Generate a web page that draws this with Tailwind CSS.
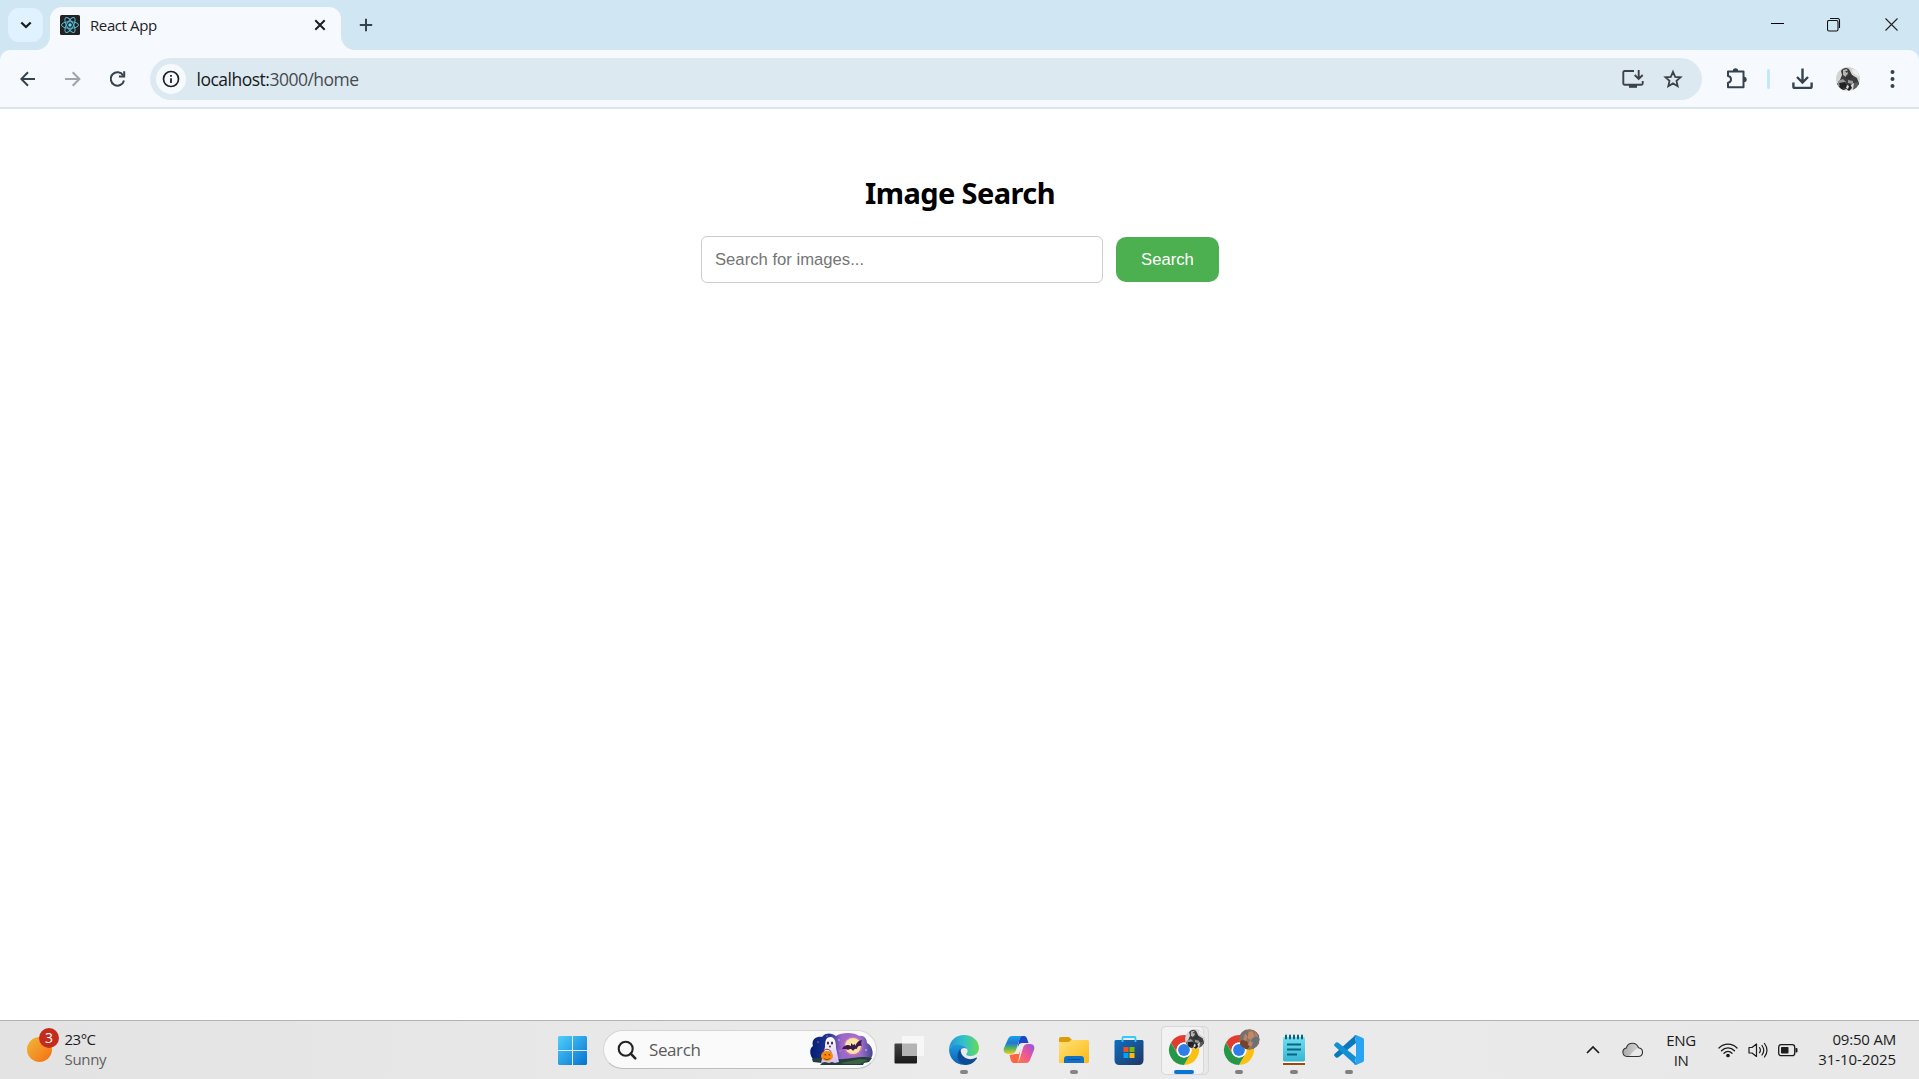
<!DOCTYPE html>
<html lang="en">
<head>
<meta charset="utf-8">
<title>React App</title>
<script src="https://cdn.jsdelivr.net/npm/@tailwindcss/browser@4"></script>
</head>
<body class="flex h-screen w-screen flex-col overflow-hidden bg-white font-['Open_Sans','Noto_Sans',sans-serif]">

<!-- Tab strip -->
<header class="flex h-[50px] shrink-0 items-start bg-[#d0e6f3]">
  <button class="mt-2 ml-2 grid h-[34px] w-[35px] place-items-center rounded-[11px] bg-[#e0f1ff]">
    <svg class="size-4" viewBox="0 0 16 16" fill="none" stroke="#1b1d1f" stroke-width="2.3"><path d="M3.3 5.5 8 10l4.700-4.500"/></svg>
  </button>
  <div class="relative mt-[7px] ml-[7px] flex h-[43px] w-[291px] items-center rounded-t-[12px] bg-[#f6faff] pb-[7px]">
    <svg class="absolute bottom-0 -left-[14px] size-[14px]" viewBox="0 0 14 14"><path d="M14 0v14H0A14 14 0 0 0 14 0z" fill="#f6faff"/></svg>
    <svg class="absolute -right-[14px] bottom-0 size-[14px]" viewBox="0 0 14 14"><path d="M0 0v14h14A14 14 0 0 1 0 0z" fill="#f6faff"/></svg>
    <svg class="ml-[10px] size-5" viewBox="0 0 20 20"><rect width="20" height="20" rx="1.500" fill="#222"/><g fill="none" stroke="#58b9d3" stroke-width="1"><ellipse cx="10" cy="10" rx="8.500" ry="3.300"/><ellipse cx="10" cy="10" rx="8.500" ry="3.300" transform="rotate(60 10 10)"/><ellipse cx="10" cy="10" rx="8.500" ry="3.300" transform="rotate(120 10 10)"/></g><circle cx="10" cy="10" r="1.700" fill="#61dafb"/></svg>
    <span class="-mt-px ml-[10px] w-[224px] text-[15px] leading-5 tracking-[-0.4px] text-[#1f2225]">React App</span>
    <svg class="size-3" viewBox="0 0 12 12" stroke="#1b1d1f" stroke-width="2"><path d="M1.300 1.300l9.400 9.400M10.700 1.300l-9.400 9.400"/></svg>
  </div>
  <svg class="mt-[18px] ml-[18px] size-[14px]" viewBox="0 0 14 14" stroke="#34434e" stroke-width="2"><path d="M7 .8v12.400M.8 7h12.400"/></svg>
  <div class="ml-auto flex gap-[43px] pt-[18px] pr-[21px]">
    <svg class="h-[14px] w-[14px]" viewBox="0 0 14 14"><path d="M1 5.500h13" stroke="#000"/></svg>
    <svg class="h-[14px] w-[14px]" viewBox="0 0 14 14" fill="none" stroke="#111" stroke-width="1.100"><rect x=".5" y="2.500" width="10.500" height="10.500" rx="1.500"/><path d="M3 .5h7.500a2 2 0 0 1 2 2V10"/></svg>
    <svg class="h-[14px] w-[14px]" viewBox="0 0 14 14" stroke="#222" stroke-width="1.100"><path d="M1.500.5l12 12M13.500.5l-12 12"/></svg>
  </div>
</header>

<!-- Toolbar -->
<div class="h-[59px] shrink-0 bg-[#d0e6f3]">
  <div class="flex h-full items-center rounded-t-[10px] border-b-2 border-[#dce3ea] bg-[#f6faff] pl-[20px]">
    <svg class="size-4" viewBox="0 0 16 16" fill="none" stroke="#34434e" stroke-width="2"><path d="M15 8H1.800M8 1.300 1.300 8 8 14.700"/></svg>
    <svg class="ml-[29px] size-4" viewBox="0 0 16 16" fill="none" stroke="#a1a5aa" stroke-width="2"><path d="M0 8h13.500M7.700 1.300 14.400 8l-6.700 6.700"/></svg>
    <svg class="ml-[29px] size-4" viewBox="0 0 16 16" fill="none" stroke="#34434e" stroke-width="2"><path d="M13.200 4.400A6.700 6.700 0 1 0 14 9.500"/><path d="M14.200.3v5.200H8.900"/></svg>
    <div class="ml-[24px] flex h-[42px] w-[1552px] items-center rounded-full bg-[#dde9f1] pr-[19px] pl-1.5">
      <span class="grid size-[30px] place-items-center rounded-full bg-[#f6faff]"><svg class="size-[18px]" viewBox="0 0 18 18"><circle cx="9" cy="9" r="7.500" fill="none" stroke="#1e2225" stroke-width="1.700"/><path d="M9 8.200v4.800M9 5v1.800" stroke="#1e2225" stroke-width="1.800"/></svg></span>
      <span class="mt-px ml-[10.500px] text-[17.500px] leading-6 tracking-[-0.5px] text-[#474b50]"><span class="text-[#17191c]">localhost:</span>3000/home</span>
      <svg class="ml-auto h-[20px] w-[22px]" viewBox="0 0 22 20" fill="none" stroke="#3d4247" stroke-width="1.900"><path d="M12 2H2.500a1.200 1.200 0 0 0-1.200 1.200v11.300c0 .7.500 1.200 1.200 1.200h17c.7 0 1.200-.5 1.200-1.200V12M16.700 1v8.500M12.700 6l4 4 4-4"/><path d="M7 15.800h8v3H7z" fill="#3d4247" stroke="none"/></svg>
      <svg class="ml-[19px] size-5" viewBox="0 0 20 20" fill="none" stroke="#3d4247" stroke-width="1.800"><path d="m10 2.800 2.200 5 5.400.500-4.100 3.600 1.200 5.300L10 14.400l-4.700 2.800 1.200-5.300L2.400 8.300l5.400-.5z"/></svg>
    </div>
    <svg class="ml-[24px] h-[22px] w-[22px]" viewBox="0 0 22 22"><path d="M2 3.500h15.500v15.700H2v-4.500c4-.5 4-6.200 0-6.700z" fill="none" stroke="#34434e" stroke-width="2" stroke-linejoin="round"/><path d="M6.800 3a2.700 2.700 0 0 1 5.400 0zM18 8.700a2.700 2.700 0 0 1 0 5.400z" fill="#34434e"/></svg>
    <span class="ml-[19px] h-5 w-[2.500px] rounded-full bg-[#c2e7ff]"></span>
    <svg class="ml-[22.500px] h-[22px] w-[22px]" viewBox="0 0 22 22" fill="none" stroke="#34434e" stroke-width="2.400"><path d="M10.500.5V14M5 9l5.500 5.500L16 9M1.400 14.500v4c0 .9.500 1.400 1.400 1.400h15.400c.9 0 1.400-.5 1.400-1.400v-4"/></svg>
    <svg class="ml-[22px] size-[24px]" viewBox="0 0 24 24"><defs><clipPath id="avatarClip"><circle cx="12" cy="12" r="12"/></clipPath><g id="avatarMono" clip-path="url(#avatarClip)"><rect width="24" height="24" fill="#d4d4d4"/><path d="M5 4c2-4 8-4 9 0l2 4 5 3 3 8-7-3-4 4-8 5-4-8 3-4 2-5z" fill="#3c3c3c"/><path d="m7 3 4-1 1 4-2 4-3-2z" fill="#b5b5b5"/><path d="m9 4 3 0-1 2zM10 8l2 2 2-3 3 2-3 3-4 0z" fill="#333"/><path d="m2 14 5-2 3 3-3 3-5 1zM12 13l5 1 0 3-5-1z" fill="#999"/><path d="m3 16 6-1 2 4 3-2 2 4-3 3-5-4-3 3z" fill="#222"/><path d="m16 2 6 2 1 6-6-4z" fill="#eee"/><path d="m18 16 5-1-2 6-4 2z" fill="#5a5a5a"/><path d="m11 18 2 1-1 3-2-1z" fill="#ddd"/></g></defs><use href="#avatarMono"/></svg>
    <svg class="ml-[30px] h-5 w-[5px]" viewBox="0 0 5 20" fill="#34434e"><circle cx="2.500" cy="3" r="2"/><circle cx="2.500" cy="10" r="2"/><circle cx="2.500" cy="17" r="2"/></svg>
  </div>
</div>

<!-- Page -->
<main class="flex flex-1 flex-col items-center bg-white pt-[64px]">
  <h1 class="pl-px font-['Noto_Sans','Open_Sans',sans-serif] text-[29px] leading-[40px] font-bold tracking-[-0.6px] text-black">Image Search</h1>
  <form class="mt-[23px] flex items-center gap-[13px] pl-px font-['Liberation_Sans',Arial,sans-serif] text-[16.670px]">
    <input class="h-[47px] w-[402px] rounded-[6px] border border-[#ccc] px-[13px] placeholder:text-[#757575]" placeholder="Search for images...">
    <button type="button" class="h-[45px] w-[103px] rounded-[10px] bg-[#4caf50] text-white">Search</button>
  </form>
</main>

<!-- Taskbar -->
<footer class="flex h-[59px] shrink-0 items-center border-t border-[#b3b3b3] bg-linear-to-r from-[#e3e3e3] via-[#ebebeb] to-[#e8e8e8] text-[#1c1c1c]">
  <div class="flex w-[558px] items-center pl-[27px]">
    <div class="relative -mt-px size-[25px] rounded-full bg-linear-to-br from-[#efb83a] to-[#f36b0c]">
      <span class="absolute -top-[9px] left-[12px] grid size-5 place-items-center rounded-full bg-[#c42b1c] text-[14px] leading-none text-white">3</span>
    </div>
    <div class="-mt-[2px] ml-[12.500px] text-[15px] leading-5 tracking-[-0.5px]"><div>23°C</div><div class="tracking-[-0.3px] text-[#5f5f5f]">Sunny</div></div>
  </div>
  <svg class="size-[29px]" viewBox="0 0 29 29"><defs><linearGradient id="winBlue" x1="0" y1="0" x2="29" y2="29" gradientUnits="userSpaceOnUse"><stop stop-color="#4fd0fc"/><stop offset="1" stop-color="#0670cf"/></linearGradient></defs><path d="M1 0h13v14H0V1zM15 0h13l1 1v13H15zM0 15h14v14H1l-1-1zM15 15h14v13l-1 1H15z" fill="url(#winBlue)"/></svg>
  <div class="-mt-px ml-[16px] flex h-[39px] w-[274px] items-center rounded-full border border-[#d5d5d5] border-b-[#bdbdbd] bg-[#fafafa] pr-[3px] pl-[13px]">
    <svg class="size-[20px]" viewBox="0 0 20 20" fill="none" stroke="#242424" stroke-width="2.100"><circle cx="8.700" cy="8.700" r="7"/><path d="m13.700 13.700 4.600 4.600" stroke-width="2.500" stroke-linecap="round"/></svg>
    <span class="mt-px ml-[12px] text-[17px] leading-6 tracking-[-0.4px] text-[#5b5b5b]">Search</span>
    <svg class="ml-auto h-[33px] w-[63px]" viewBox="0 0 63 33">
      <defs><linearGradient id="night"><stop stop-color="#051f72"/><stop offset=".3" stop-color="#203393"/><stop offset=".5" stop-color="#9a68c8"/><stop offset=".8" stop-color="#a070c8"/><stop offset="1" stop-color="#454597"/></linearGradient><linearGradient id="ghost" x2="0" y2="1"><stop stop-color="#fff"/><stop offset="1" stop-color="#d3bdf2"/></linearGradient></defs>
      <path d="M5 28C-1 24-1 15 3 13 1 7 6 3 12 4 15-.5 22-.5 26 3c5-4 19-4 23 0 5-1 8 3 8 7 6 3 7 12 4 15l-3 3z" fill="url(#night)"/>
      <path d="M2 26c8-2 18-1 26 0s24-4 34-1l-3 4-5 1-1 2H10l2-2-9-1z" fill="#263d3e"/><path d="m30 30 20-4 8 1-8 4H35z" fill="#3b6444"/>
      <circle cx="43" cy="13" r="9.500" fill="#c674c2"/><circle cx="43" cy="13" r="8" fill="#ffe5a2"/>
      <path d="M32 16c2-4 6-5 9-3l0-3 2 2 2-1 0 2c2-4 4-6 7-6-1 2-1 4 0 6-3-1-5 1-5 3-2-1-3 1-4 2-2-3-3-2-5-1-1-1-3-1-4-1z" fill="#3a1b4d"/>
      <path d="M15 14c0-6 1-10 5.500-10s5.500 5 5.500 11l3 14-4 1-3-1-3 1-4-1-4 1z" fill="url(#ghost)"/><ellipse cx="18" cy="10" rx="1" ry="1.600" fill="#211847"/><ellipse cx="22" cy="10" rx="1" ry="1.600" fill="#211847"/><circle cx="20" cy="13.500" r="1" fill="#482f68"/>
      <path d="M13 20c0-5 8-5 8 0" fill="none" stroke="#7b4a2d"/><ellipse cx="17" cy="23" rx="6" ry="5" fill="#f88a0c"/><path d="m14 22 1.500-1 1 1.500zM18 22l1.500-1 1 1.500zM13.500 24.500c2 2 5 2 7 0-1 3-6 3-7 0z" fill="#51200b"/>
      <g fill="#e7cfff"><circle cx="8" cy="9" r=".6"/><circle cx="29" cy="7" r=".7"/><circle cx="56" cy="17" r=".8"/><circle cx="17" cy="3" r=".6"/><circle cx="30" cy="18" r=".5"/></g>
    </svg>
  </div>

  <nav class="ml-[4.500px] flex h-full [&>div]:relative [&>div]:flex [&>div]:h-full [&>div]:w-[55px] [&>div]:justify-center [&>div]:pt-[14px] [&_svg]:size-[30px] [&_svg]:overflow-visible">
    <div>
      <svg viewBox="0 0 30 30"><defs><linearGradient id="tvDark" x2="0" y2="1"><stop stop-color="#444"/><stop offset="1" stop-color="#191919"/></linearGradient></defs><rect x=".5" y="8.500" width="22.500" height="20" rx="1" fill="url(#tvDark)"/><rect x="8" y="1" width="22" height="20" rx="1" fill="#f7f7f7"/><path d="M8 8.500h15V21H8z" fill="#b4b4b4"/></svg>
    </div>
    <div>
      <svg viewBox="0 0 30 30"><defs><linearGradient id="edgeTop"><stop stop-color="#2595dc"/><stop offset=".5" stop-color="#32c2c9"/><stop offset="1" stop-color="#66db54"/></linearGradient><linearGradient id="edgeBody" x2="0" y2="1"><stop stop-color="#209ade"/><stop offset="1" stop-color="#0b5eb4"/></linearGradient></defs>
      <path d="M0 14C1 5 7 0 15 0c9 0 15 6 15 13 0 5-4 8-8 8-4 0-6-1-4-3 2-3-1-8-7-8C6 10 2 11 0 14z" fill="url(#edgeTop)"/>
      <path d="M0 14c2-4 7-5 11-4 4 0 6 2 7 4-5-3-8 2-7 6 1 5 5 8 9 9C9 32 0 25 0 14z" fill="url(#edgeBody)"/>
      <path d="M11.500 14c-4 3-5 14 5 16 5 0 9-3 11-6 1-1 0-2-1-1-6 3-15 0-15-9z" fill="#0d4d96"/></svg>
      <span class="absolute bottom-[5px] h-1 w-2 rounded-full bg-[#858585]"></span>
    </div>
    <div>
      <svg viewBox="0 0 30 30"><defs><linearGradient id="coA" x2="0" y2="1"><stop stop-color="#13a3ed"/><stop offset=".4" stop-color="#2377d3"/><stop offset=".7" stop-color="#5cb957"/><stop offset="1" stop-color="#f1cc1e"/></linearGradient><linearGradient id="coB" x1="1" y1="0" x2="0" y2="1"><stop stop-color="#9153e9"/><stop offset=".5" stop-color="#ef5795"/><stop offset="1" stop-color="#ff7d38"/></linearGradient></defs>
      <path d="M16 1h4c2 0 3 2 3.500 4l1 3h-6c-3 0-4 2-5 5z" fill="#1e45c8"/><path d="M14 28h-4c-2 0-3-2-3.500-4l-1-4 6-1c3 0 4-2 5-5z" fill="#fa6742"/>
      <path d="M8 1h11c-2 0-3 2-4 5l-3 9c-1 3-3 4-5 4H4c-4 0-5-3-4-6l4-9c1-2 2-3 4-3z" fill="url(#coA)"/><path d="M22 28H12c2 0 3-2 4-5l3-10c1-3 2-4 5-4h2c4 0 5 3 4 6l-4 10c-1 2-2 3-4 3z" fill="url(#coB)"/><path d="m15.500 9-3 10h2.500l3.200-10z" fill="#ececec"/></svg>
    </div>
    <div>
      <svg viewBox="0 0 30 30"><defs><linearGradient id="folder" x2="1" y2="1"><stop stop-color="#ffe27b"/><stop offset="1" stop-color="#fdb910"/></linearGradient></defs><path d="M0 4c0-1 .5-2 2-2h8l3 3v4H0z" fill="#dd9b08"/><path d="M0 7h9c2 0 2-2 4-2h16l1 1v21l-1 1H0z" fill="url(#folder)"/><path d="M5 28v-4c0-2 1-3 3-3h14c2 0 3 1 3 3v4z" fill="#1172c5"/><path d="M9 24.500h12" stroke="#064e98" stroke-linecap="round"/></svg>
      <span class="absolute bottom-[5px] h-1 w-2 rounded-full bg-[#858585]"></span>
    </div>
    <div>
      <svg viewBox="0 0 30 30"><defs><linearGradient id="store" x2="1" y2="1"><stop stop-color="#0e6fc1"/><stop offset="1" stop-color="#213665"/></linearGradient></defs><path d="M.500 6 1.500 5h27l1 1v19q0 5-5 5h-19q-5 0-5-5z" fill="url(#store)"/><path d="M8.500 7V3q0-1 1-1h11q1 0 1 1v4" fill="none" stroke="#37c7f8" stroke-width="1.800"/><path d="M9.500 12h5v5h-5z" fill="#f25022"/><path d="M15.500 12h5v5h-5z" fill="#7fba00"/><path d="M9.500 18h5v5h-5z" fill="#00a4ef"/><path d="M15.500 18h5v5h-5z" fill="#ffb900"/></svg>
    </div>
    <div>
      <span class="absolute top-[5px] left-[4px] h-[49px] w-[48px] rounded-[5px] border border-[#d8d8d8] bg-[#e8e8e8]"></span>
      <span class="absolute top-[5px] left-[4px] h-[49px] w-[43px] rounded-[5px] border border-[#d8d8d8] bg-[#f2f2f2]"></span>
      <svg class="relative" viewBox="0 0 30 30"><defs><g id="chrome"><circle cx="15" cy="15" r="15" fill="#fff"/><path d="M2 7.500A15 15 0 0 1 28 7.500H15a7.500 7.500 0 0 0-6.500 11z" fill="#e33b2e"/><path d="M28 7.500A15 15 0 0 1 15 30l6.500-11.200A7.500 7.500 0 0 0 15 7.500z" fill="#fdc010"/><path d="M15 30A15 15 0 0 1 2 7.500l6.500 11.300A7.500 7.500 0 0 0 21.500 18.800z" fill="#259746"/><circle cx="15" cy="15" r="7.500" fill="#fff"/><circle cx="15" cy="15" r="5.900" fill="#2f7de9"/></g></defs><use href="#chrome"/><use href="#avatarMono" transform="translate(16 -6) scale(.835)"/></svg>
      <span class="absolute bottom-[5px] h-1 w-5 rounded-full bg-[#0b75d1]"></span>
    </div>
    <div>
      <svg viewBox="0 0 30 30"><use href="#chrome"/><g transform="translate(15 -6) scale(.87)" clip-path="url(#avatarClip)"><circle cx="12" cy="12" r="12" fill="#927361"/><path d="m0 5 8-5 5 4-4 9-9-1z" fill="#77706b"/><path d="m11 3 5 0 2 6-3 4-5-2z" fill="#c08865"/><path d="m15 11 8-5v9l-6 8-5-5z" fill="#6b7177"/><path d="m2 13 6 0 5 6-4 5-8-5z" fill="#72432d"/><path d="m7 5 3 4-2 5-3-2z" fill="#bb8568"/><path d="m13 13 3 3-2 5-4-3zM18 3l4 6-3 0z" fill="#b7866b"/></g></svg>
      <span class="absolute bottom-[5px] h-1 w-2 rounded-full bg-[#808080]"></span>
    </div>
    <div>
      <svg viewBox="0 0 30 30"><defs><linearGradient id="note" x2="0" y2="1"><stop stop-color="#71dff0"/><stop offset="1" stop-color="#36b5d2"/></linearGradient></defs><path d="M4 26h22v4H4z" fill="#9e4a0b"/><path d="M4 25h22v3H4z" fill="#fafafa"/><rect x="4" y="2" width="22" height="24.500" rx="1.500" fill="url(#note)"/><path d="M8 9.500h14M8 14.500h14M8 19.500h10" stroke="#096483" stroke-width="1.800"/><path d="M7 .500v3M11 .500v3M15 .500v3M19 .500v3M23 .500v3" stroke="#115b75" stroke-width="2" stroke-linecap="round"/></svg>
      <span class="absolute bottom-[5px] h-1 w-2 rounded-full bg-[#808080]"></span>
    </div>
    <div>
      <svg viewBox="0 0 30 30"><path d="M22 8 4 22.500q-1 .5-2 0L.5 21q-1-1 0-2L21 .500z" fill="#0879be"/><path d="M22 22 4 7.500q-1-.5-2 0L.5 9q-1 1 0 2L21 29.500z" fill="#138fd4"/><path d="m22 0 7 3q1 .5 1 2v20q0 1.500-1 2l-7 3z" fill="#27a4f2"/><path d="M22 0v30q-1 0-2-1l2-3V4l-2-3q1-1 2-1z" fill="#1794dc"/></svg>
      <span class="absolute bottom-[5px] h-1 w-2 rounded-full bg-[#808080]"></span>
    </div>
  </nav>

  <div class="ml-auto flex items-center pr-[23px]">
    <svg class="h-4 w-[14px]" viewBox="0 0 14 16" fill="none" stroke="#1c1c1c" stroke-width="1.700"><path d="m1 11 6-6 6 6"/></svg>
    <svg class="ml-[22px] h-4 w-[21px]" viewBox="0 0 21 16"><defs><linearGradient id="cloud"><stop stop-color="#aaa"/><stop offset="1" stop-color="#ddd"/></linearGradient></defs><path d="M5 14.500A4.300 4.300 0 0 1 4.300 6C5 3 7.500 1.200 10.500 1.200c3 0 5 1.800 6 4.500 2.500.3 4 2 4 4.300 0 2.500-1.800 4.500-4.500 4.500z" fill="url(#cloud)"/><path d="M6 14.500c3-1 5-6 10-8.800 2.500.3 4.500 2 4.500 4.300 0 2.500-1.800 4.500-4.500 4.500z" fill="#e9e9e9"/><path d="M5 14.500A4.300 4.300 0 0 1 4.300 6C5 3 7.500 1.200 10.500 1.200c3 0 5 1.800 6 4.500 2.500.3 4 2 4 4.300 0 2.500-1.800 4.500-4.500 4.500z" fill="none" stroke="#333" stroke-width="1.100"/></svg>
    <div class="-mt-px ml-[18px] w-[40px] text-center text-[15px] leading-5 tracking-[-0.4px]">ENG<br>IN</div>
    <svg class="ml-[17px] size-5" viewBox="0 0 20 20" fill="none" stroke="#1c1c1c" stroke-width="1.300" stroke-linecap="round"><path d="M1 8c5-5.200 13-5.200 18 0M3.500 10.700c3.700-3.900 9.300-3.900 13 0M6 13.300c2.400-2.500 5.600-2.500 8 0"/><circle cx="10" cy="15.500" r="1.200" fill="#1c1c1c"/></svg>
    <svg class="ml-[10px] size-5" viewBox="0 0 20 20" fill="none" stroke="#1c1c1c" stroke-width="1.200" stroke-linecap="round" stroke-linejoin="round"><path d="M1 7.500h3L8.500 4v12.500L4 13H1z"/><path d="M11.500 7.700q1.800 2.500 0 5M14 5.500q3.500 4.800 0 9.500M16.500 3.500q5 6.700 0 13.500"/></svg>
    <svg class="ml-[10px] size-5" viewBox="0 0 20 20"><rect x=".7" y="4.700" width="16" height="11" rx="2.500" fill="none" stroke="#1c1c1c" stroke-width="1.300"/><rect x="3" y="7" width="7.500" height="6.500" rx=".8" fill="#1c1c1c"/><path d="M17.500 8h1q1 0 1 1v2.500q0 1-1 1h-1z" fill="#1c1c1c"/></svg>
    <div class="-mt-[2px] ml-[17px] w-[81px] text-right text-[15px] leading-5 whitespace-nowrap"><span class="tracking-[-0.2px]">09:50 AM</span><br><span class="tracking-[-0.05px]">31-10-2025</span></div>
  </div>
</footer>
</body>
</html>
